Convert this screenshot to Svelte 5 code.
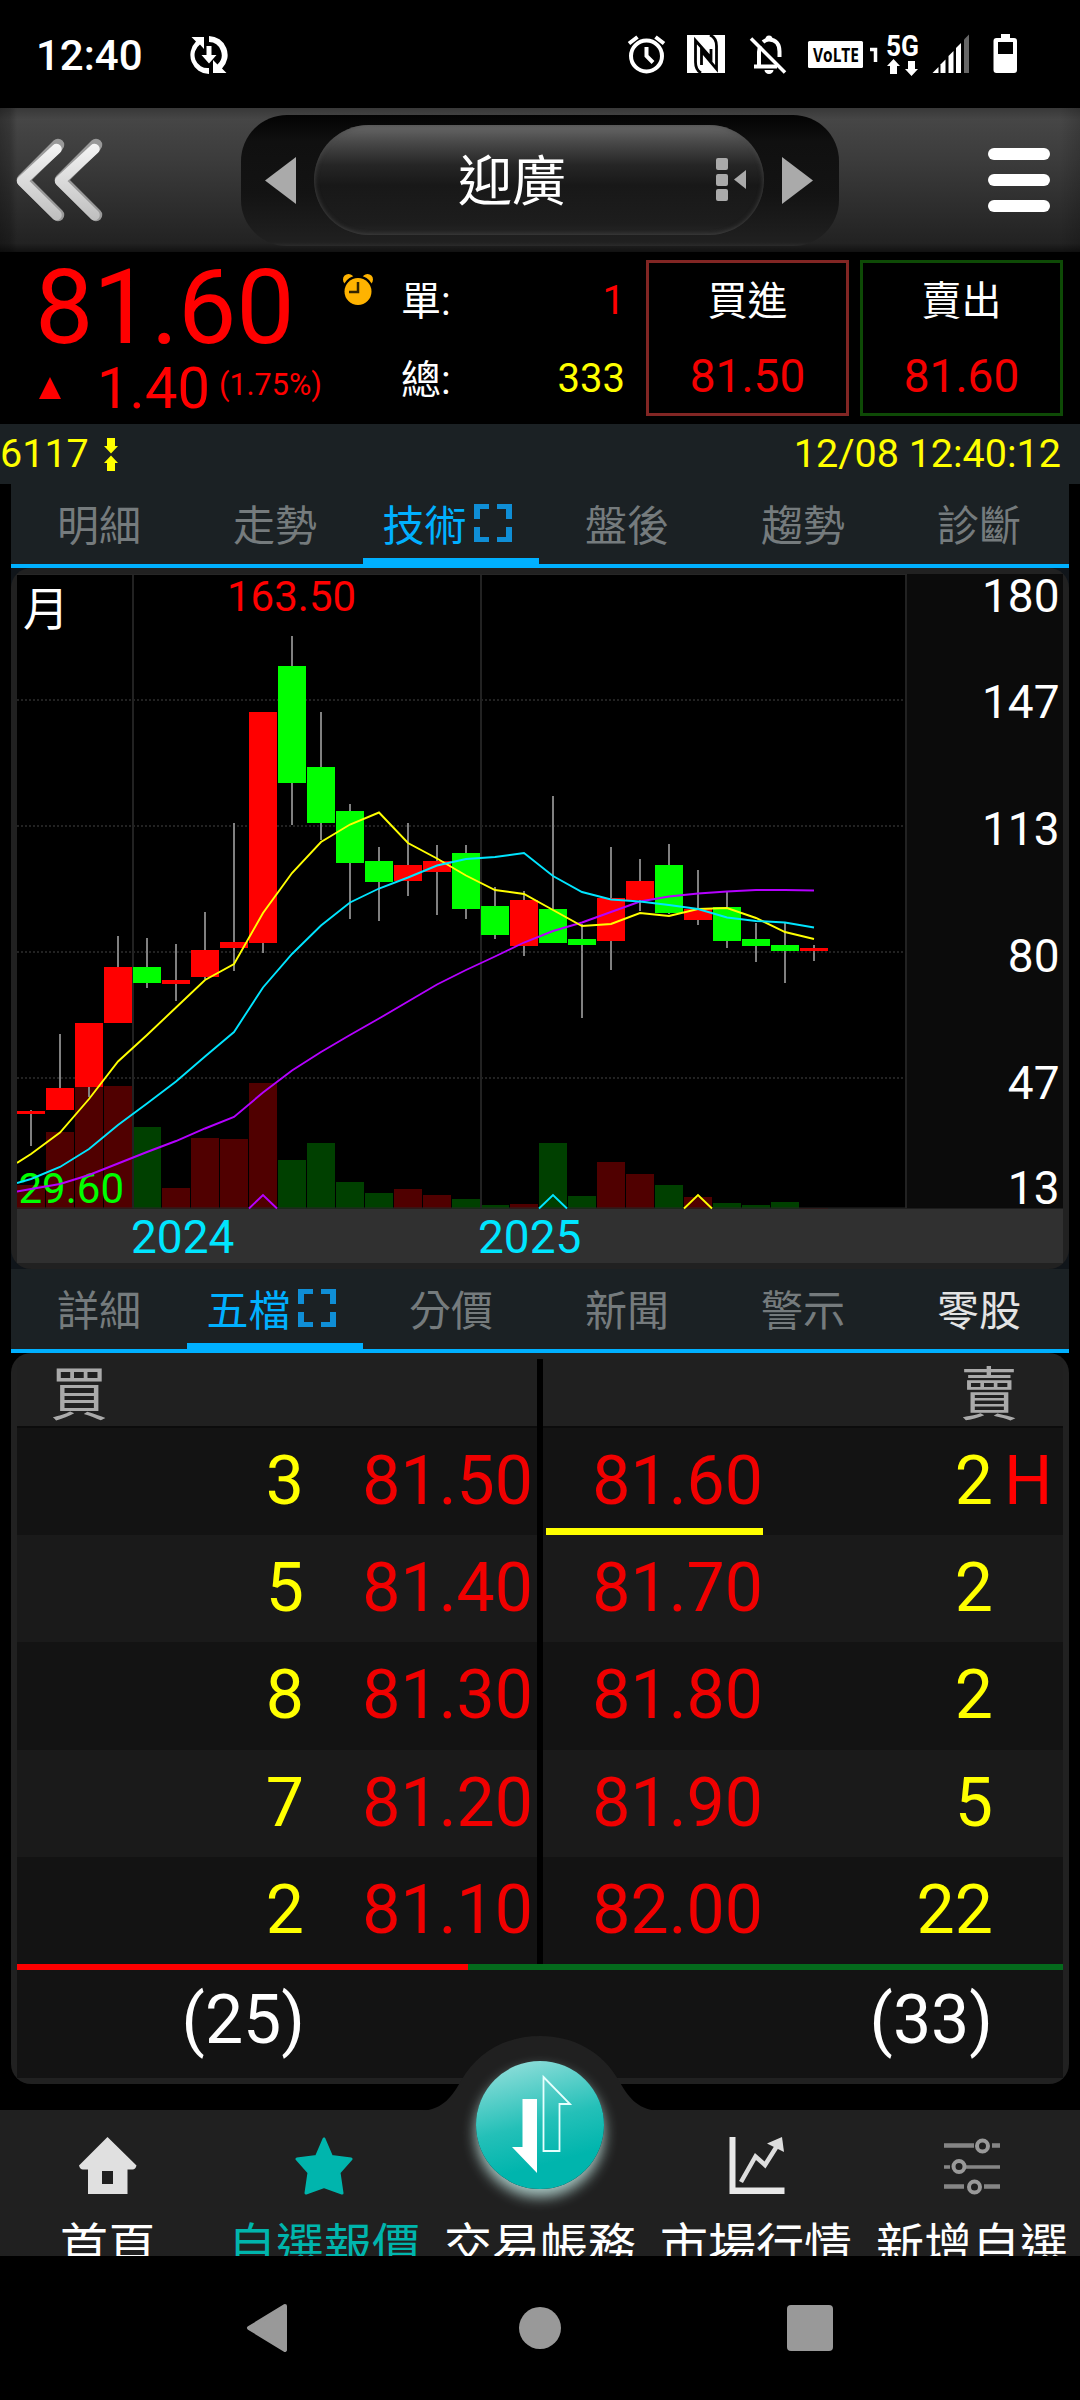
<script>
const topTabs = ["明細", "走勢", "技術", "盤後", "趨勢", "診斷"];
const lowerTabs = ["詳細", "五檔", "分價", "新聞", "警示", "零股"];
let topActive = $state(2);
let lowerActive = $state(1);

const bids = [
  { qty: 3, price: "81.50" },
  { qty: 5, price: "81.40" },
  { qty: 8, price: "81.30" },
  { qty: 7, price: "81.20" },
  { qty: 2, price: "81.10" },
];
const asks = [
  { qty: 2, price: "81.60", mark: "H" },
  { qty: 2, price: "81.70" },
  { qty: 2, price: "81.80" },
  { qty: 5, price: "81.90" },
  { qty: 22, price: "82.00" },
];
let bidTotal = $derived(bids.reduce((sum, b) => sum + b.qty, 0));
let askTotal = $derived(asks.reduce((sum, a) => sum + a.qty, 0));

// body top, body bottom, high, low, volume top, up?
const candles = [
  [541, 544, 540, 576, 615, 1],
  [518, 540, 464, 540, 562, 1],
  [453, 517, 453, 527, 517, 1],
  [397, 453, 366, 453, 516, 1],
  [397, 413, 368, 418, 557, 0],
  [410, 414, 374, 431, 618, 1],
  [380, 407, 342, 409, 568, 1],
  [372, 378, 253, 401, 569, 1],
  [142, 373, 142, 383, 513, 1],
  [96, 213, 66, 255, 590, 0],
  [197, 253, 142, 270, 573, 0],
  [241, 293, 234, 349, 612, 0],
  [291, 312, 277, 351, 623, 0],
  [295, 311, 253, 326, 619, 1],
  [291, 302, 275, 345, 625, 1],
  [283, 339, 275, 349, 629, 0],
  [336, 365, 317, 369, 635, 0],
  [330, 376, 321, 386, 634, 1],
  [339, 373, 226, 373, 573, 0],
  [369, 375, 354, 448, 626, 0],
  [328, 371, 277, 400, 592, 1],
  [311, 330, 289, 341, 604, 1],
  [295, 343, 274, 344, 615, 0],
  [339, 350, 300, 355, 627, 1],
  [337, 371, 322, 378, 633, 0],
  [369, 376, 353, 392, 635, 0],
  [375, 381, 353, 413, 632, 0],
  [378, 381, 375, 391, 638, 1],
];

// moving averages, first value sits on the left edge of the plot
const averages = [
  { color: "#b400ff", ys: [621.5, 619, 614, 605, 593.5, 582, 571, 558.5, 547, 522.5, 500.5, 482, 465, 448.5, 431.5, 414.5, 400, 386.5, 372.5, 361, 352.5, 342, 331.5, 326.5, 323.5, 321.5, 320, 320, 320.5] },
  { color: "#ffff00", ys: [593, 584, 562.5, 529, 491.5, 465, 437.5, 410, 394, 343, 303, 272, 254.5, 242.5, 273, 288.5, 305.5, 320, 324, 340, 356, 354, 343, 346, 339, 338, 348, 362, 369] },
  { color: "#00e5ff", ys: [613, 609, 597, 579, 555, 533.5, 511.5, 486.5, 462, 417.5, 384, 355.5, 332.5, 318.5, 307.5, 295.5, 289, 287, 283, 306, 322, 329.5, 331.5, 335, 339, 347.5, 351, 352.5, 357.5] },
];
const markers = [
  { i: 8, color: "#b400ff" },
  { i: 18, color: "#00e5ff" },
  { i: 23, color: "#ffff00" },
];
const scaleLabels = [
  ["180", 42],
  ["147", 148],
  ["113", 275],
  ["80", 402],
  ["47", 529],
  ["13", 634],
];

const left = (i) => 17 + i * 29;
const mid = (i) => left(i) + 14;
const linePoints = (ys) =>
  ys.map((y, i) => `${i === 0 ? 17 : mid(i - 1)},${y}`).join(" ");
</script>

{#snippet tabBar(labels, active, pick, lit)}
  <div class="tabs">
    {#each labels as label, i}
      <button class="tab" class:active={i === active} class:lit={i === lit} onclick={() => pick(i)}>
        {label}
        {#if i === active}
          <svg class="expand" viewBox="0 0 38 38" width="38" height="38">
            <path d="M0 15V0h15v5H6v10zM38 15V0H23v5h9v10zM0 23v15h15v-5H6V23zM38 23v15H23v-5h9V23z" fill="#0f8ed6" />
          </svg>
        {/if}
      </button>
    {/each}
  </div>
{/snippet}

<div class="screen">
  <div class="status">
    <span class="clock">12:40</span>
    <svg class="sync" viewBox="190 35 38 38" width="38" height="38">
      <path d="M209 35a19 19 0 0 1 13 32.500l4.500 4.500h-13.500V59l4.500 4.500A13 13 0 0 0 209 41z" fill="#fff" />
      <path d="M209 73a19 19 0 0 1-13-32.500L191.500 36H204v12l-4-4.500A13 13 0 0 0 209 67z" fill="#fff" />
      <path d="M206.500 45h5v9h5L209 62.500 201.500 54h5z" fill="#fff" />
    </svg>
    <svg class="status-icons" viewBox="620 30 400 50" width="400" height="50">
      <g fill="none" stroke="#fff" stroke-width="4">
        <circle cx="646.500" cy="56" r="15.500" />
        <path d="M646.500 47v9l6.500 6.500" stroke-width="4" />
        <path d="M629 43.500l8.500-6.500M664 43.500l-8.500-6.500" />
      </g>
      <rect x="687" y="35" width="38" height="38" fill="#fff" />
      <path d="M701 73q-5.500-3-5.500-11V40.500L711 58V49M710 35q6.500 3 6.500 11V69L701.500 51v14" fill="none" stroke="#000" stroke-width="2.800" />
      <g fill="none" stroke="#fff" stroke-width="4">
        <path d="M759 67V52q0-3 1.500-6M763 42q3-2.500 6-2.500c7 0 10.500 5 10.500 12v5.500M754 66.500h23" />
        <path d="M751 38.500l34 34" stroke-width="3.600" />
      </g>
      <path d="M765.500 41v-2a3.500 3.500 0 0 1 7 0v2zM764.500 70h9a4.500 4 0 0 1-9 0z" fill="#fff" />
      <rect x="808" y="41" width="55" height="27" rx="1.500" fill="#fff" />
      <text class="volte" x="813" y="62" textLength="46" lengthAdjust="spacingAndGlyphs">VoLTE</text>
      <path d="M870 49.500h5.500V62" fill="none" stroke="#fff" stroke-width="3.500" />
      <text class="fiveg" x="886" y="56" textLength="33" lengthAdjust="spacingAndGlyphs">5G</text>
      <path d="M893.500 59l6.500 7h-3v8h-7v-8h-3zM911.500 76l-6.500-7h3v-8h7v8h3z" fill="#fff" />
      <g fill="#fff">
        <path d="M932.500 73l6-6v6z" />
        <path d="M940.500 73v-8.500l5-5V73z" />
        <path d="M948.500 73V56l5-5v22z" />
        <path d="M956 73V48l5-5v30z" />
        <path d="M964 73V39.500l5-5V73z" fill="#666" />
      </g>
      <path d="M1001 34h9v4h4q3 0 3 3v29q0 3-3 3h-17.500q-3 0-3-3V41q0-3 3-3h4.500z" fill="#fff" />
      <rect x="998" y="42" width="15" height="12" fill="#000" />
    </svg>
  </div>

  <header class="header">
    <svg class="back" viewBox="14 136 92 88" width="92" height="88">
      <defs>
        <linearGradient id="chev" gradientUnits="userSpaceOnUse" x1="0" y1="140" x2="0" y2="222">
          <stop offset="0" stop-color="#f8f8f8" />
          <stop offset="1" stop-color="#bdbdbd" />
        </linearGradient>
      </defs>
      <g fill="none" stroke-linecap="round" stroke-linejoin="round">
        <path d="M58 145L23 180l35 35M96 145L61 180l35 35" stroke="#999" stroke-width="12.500" />
        <path d="M56.500 149L22 181l34.500 34M94.500 149L60 181l34.500 34" stroke="url(#chev)" stroke-width="10.500" />
      </g>
    </svg>
    <div class="switcher">
      <svg viewBox="0 0 31 47" width="31" height="47"><path d="M0 23.500L31 0v47z" fill="#aaa" /></svg>
      <div class="name">
        <span>迎廣</span>
        <svg class="picker" viewBox="0 0 31 44" width="31" height="44">
          <g fill="#aaa">
            <rect x="0" y="0" width="12" height="12" rx="2" />
            <rect x="0" y="16" width="12" height="12" rx="2" />
            <rect x="0" y="31" width="12" height="12" rx="2" />
            <path d="M18 21.500L30 12v19z" />
          </g>
        </svg>
      </div>
      <svg viewBox="0 0 31 47" width="31" height="47"><path d="M31 23.500L0 0v47z" fill="#aaa" /></svg>
    </div>
    <div class="menu"><i></i><i></i><i></i></div>
  </header>

  <section class="quote">
    <div class="last">
      <div class="price">81.60</div>
      <div class="change">
        <svg viewBox="0 0 22 22" width="22" height="22"><path d="M11 0L22 22H0z" fill="#f00" /></svg>
        <span class="diff">1.40</span>
        <span class="pct">(1.75%)</span>
      </div>
    </div>
    <svg class="alarm" viewBox="343 274 30 32" width="30" height="32">
      <g fill="#ffb300">
        <circle cx="348.500" cy="279.500" r="5.500" />
        <circle cx="367.500" cy="279.500" r="5.500" />
        <circle cx="358" cy="291" r="15.500" fill="#000" />
        <circle cx="358" cy="291.500" r="13.500" />
      </g>
      <path d="M358 282v10h-9" fill="none" stroke="#332400" stroke-width="2.500" />
    </svg>
    <dl class="volume">
      <div><dt class="up">單:</dt><dd class="red">1</dd></div>
      <div><dt>總:</dt><dd>333</dd></div>
    </dl>
    <button class="deal buy"><span>買進</span><b>81.50</b></button>
    <button class="deal sell"><span>賣出</span><b>81.60</b></button>
  </section>

  <div class="info">
    <span>6117</span>
    <svg viewBox="0 0 14 33" width="14" height="33">
      <path d="M3 0h8v8h3l-7 7.500L0 8h3zM3 33h8v-8h3l-7-7.500L0 25h3z" fill="#ff0" />
    </svg>
    <time>12/08 12:40:12</time>
  </div>

  <main class="body">
    {@render tabBar(topTabs, topActive, (i) => (topActive = i), -1)}

    <div class="chart-wrap">
      <div class="chart">
        <svg viewBox="17 4 1046 689" width="1046" height="689">
          <rect x="17" y="4" width="1046" height="635" fill="#000" />
          <rect x="907" y="4" width="156" height="635" fill="#0b0b0b" />
          <rect x="17" y="638.500" width="1046" height="54.500" fill="#303030" />

          {#each candles as c, i}
            <rect x={left(i)} y={c[4]} width="28" height={638.5 - c[4]} fill={c[5] ? "#500000" : "#004000"} />
          {/each}

          {#each [130, 256, 382, 508] as y}
            <line x1="17" x2="907" y1={y} y2={y} stroke="#2e2e2e" stroke-width="1.500" stroke-dasharray="2 2" />
          {/each}
          {#each [133, 481, 906] as x}
            <line x1={x} x2={x} y1="4" y2="638" stroke="#222" stroke-width="2" />
          {/each}
          <path d="M17 4.500H907M17 638H907" stroke="#262626" />

          {#each candles as c, i}
            <rect x={mid(i) - 1} y={c[2]} width="2" height={c[3] - c[2]} fill="#808080" />
            <rect x={left(i)} y={c[0]} width="28" height={c[1] - c[0]} fill={c[5] ? "#ff0000" : "#00ff00"} />
          {/each}

          <text x="18.500" y="633" class="extreme" fill="#00ff00">29.60</text>
          {#each averages as avg}
            <polyline points={linePoints(avg.ys)} fill="none" stroke={avg.color} stroke-width="1.900" />
          {/each}
          {#each markers as m}
            <path d={`M${left(m.i)} 638.500l14-13.500 14 13.500`} fill="none" stroke={m.color} stroke-width="1.900" />
          {/each}

          <text x="23" y="54.500" class="period">月</text>
          <text x="227" y="41" class="extreme" fill="#ff0000">163.50</text>
          {#each scaleLabels as [label, y]}
            <text x="1059.500" {y} class="axis" text-anchor="end">{label}</text>
          {/each}
          <text x="131" y="682.500" class="axis year">2024</text>
          <text x="478" y="682.500" class="axis year">2025</text>
        </svg>
      </div>
    </div>

    {@render tabBar(lowerTabs, lowerActive, (i) => (lowerActive = i), 5)}

    <div class="book">
      <div class="sides">
        <div class="side">
          <div class="head">買</div>
          {#each bids as b}
            <div class="row bid"><span class="qty">{b.qty}</span><span class="px">{b.price}</span></div>
          {/each}
        </div>
        <div class="side">
          <div class="head right">賣</div>
          {#each asks as a}
            <div class="row ask">
              <span class="px" class:hit={a.mark}>{a.price}</span>
              <span class="qty">{a.qty}</span>
              <span class="mark">{a.mark ?? ""}</span>
            </div>
          {/each}
        </div>
      </div>
      <div class="ratio"><i style:width="{(bidTotal / (bidTotal + askTotal)) * 100}%"></i></div>
      <div class="totals"><span>({bidTotal})</span><span>({askTotal})</span></div>
    </div>
  </main>

  <nav class="nav">
    <svg class="hump" viewBox="0 0 240 75" width="240" height="75">
      <path d="M2 75C24 73 32 60 41 45C57 16 86 0 120 0s63 16 79 45C208 60 216 73 238 75z" fill="#202020" />
    </svg>
    <a class="item">
      <svg viewBox="79 2137 58 58" width="58" height="58">
        <path fill-rule="evenodd" d="M107.500 2137l29 28.500q-1 4-4 4h-5V2194H88v-24.500h-5q-3 0-4-4zM102 2171v13h11v-13z" fill="#e0e0e0" />
      </svg>
      <span>首頁</span>
    </a>
    <a class="item on">
      <svg viewBox="0 0 58 58" width="58" height="58">
        <path d="M29 2l7.500 17.500L56 22 44 35.500 47 56 29 49.500 11 56l3-20.500L2 22l19.500-2.500z" fill="#00b5ad" stroke="#00b5ad" stroke-width="3" stroke-linejoin="round" />
      </svg>
      <span>自選報價</span>
    </a>
    <a class="item"><i></i><span>交易帳務</span></a>
    <a class="item">
      <svg viewBox="727 2137 58 58" width="58" height="58">
        <path d="M729.500 2137h6v50.500h49v6.500h-55z" fill="#e8e8e8" />
        <path d="M741 2182l14.500-25.500 9.500 8.500 12-19" fill="none" stroke="#ddd" stroke-width="4.500" />
        <path d="M782 2137l2 15-17-8.500z" fill="#ddd" />
      </svg>
      <span>市場行情</span>
    </a>
    <a class="item">
      <svg viewBox="944 2137 58 58" width="58" height="58">
        <g fill="none" stroke="#858585" stroke-width="4.500">
          <path d="M945 2145.500h30M993 2145.500h8M945 2186.500h20M985 2186.500h16" />
          <path d="M945 2167h6M967 2167h34" stroke-width="3.500" />
          <g stroke="#999" stroke-width="4">
            <circle cx="983.500" cy="2146" r="5.500" />
            <circle cx="960" cy="2166.500" r="5.500" />
            <circle cx="975.500" cy="2187" r="5.500" />
          </g>
        </g>
      </svg>
      <span>新增自選</span>
    </a>
    <button class="trade" aria-label="交易帳務">
      <svg viewBox="476 2061 128 128" width="128" height="128">
        <path d="M522.500 2099H537v74l-25-26h10.500z" fill="#fff" />
        <path d="M543.500 2077l26.500 27h-10.500v47h-16z" fill="none" stroke="#e6fffd" stroke-width="1.800" />
      </svg>
    </button>
  </nav>

  <div class="system">
    <svg viewBox="0 0 42 48" width="42" height="48"><path d="M39 2L3 24l36 22z" fill="#999" stroke="#999" stroke-width="4" stroke-linejoin="round" /></svg>
    <i class="round"></i>
    <i class="square"></i>
  </div>
</div>

<style>
:global(body) {
  background: #000;
}
.screen {
  width: 1080px;
  height: 2400px;
  background: #000;
  color: #fff;
  font-family: Roboto, "Noto Sans CJK TC", sans-serif;
  overflow: hidden;
}
svg {
  display: block;
  flex: none;
}
button {
  font: inherit;
  color: inherit;
  background: none;
  border: 0;
  padding: 0;
}

.status {
  height: 108px;
  box-sizing: border-box;
  padding: 2px 60px 0 36px;
  display: flex;
  align-items: center;
}
.clock {
  width: 154px;
  font-size: 42px;
  font-weight: 500;
}
.status-icons {
  margin-left: auto;
}
.volte {
  font: 700 20px "Open Sans", sans-serif;
  fill: #000;
}
.fiveg {
  font: 700 29px Roboto, sans-serif;
  fill: #fff;
}

.header {
  height: 144px;
  display: flex;
  align-items: center;
  background:
    linear-gradient(90deg, rgba(0, 0, 0, 0.3), rgba(0, 0, 0, 0.2) 10px, transparent 17px, transparent 1060px, rgba(0, 0, 0, 0.15)),
    linear-gradient(#383838, #464646 8%, #3c3c3c 35%, #222 94%, #111);
}
.back {
  margin-left: 14px;
}
.switcher {
  width: 598px;
  height: 131px;
  margin-left: 135px;
  box-sizing: border-box;
  padding: 0 26px 0 24px;
  display: flex;
  align-items: center;
  justify-content: space-between;
  border-radius: 46px;
  background: linear-gradient(#030303, #101010 20%, #131313 60%, #202020 97%, #2a2a2a);
}
.name {
  width: 450px;
  height: 110px;
  border-radius: 55px;
  display: flex;
  align-items: center;
  padding-left: 144px;
  box-sizing: border-box;
  font-size: 54px;
  line-height: 1;
  background: linear-gradient(#686868, #484848 16%, #262626 36%, #181818 55%, #1d1d1d 90%, #262626);
  box-shadow: inset 0 0 5px #4a4a4a;
}
.name span {
  padding-top: 5px;
}
.picker {
  margin-left: 150px;
}
.menu {
  width: 62px;
  margin-left: 149px;
  display: grid;
  gap: 14px;
}
.menu i {
  height: 12px;
  border-radius: 6px;
  background: #fff;
}

.quote {
  height: 172px;
  display: flex;
}
.last {
  width: 343px;
  padding-top: 12px;
  box-sizing: border-box;
  color: #f00;
}
.price {
  height: 88px;
  padding-left: 35px;
  font-size: 104px;
  line-height: 88px;
  letter-spacing: -0.4px;
}
.change {
  height: 72px;
  padding-left: 39px;
  display: flex;
  align-items: center;
  line-height: 1;
}
.diff {
  margin-left: 36px;
  width: 122px;
  font-size: 58px;
}
.pct {
  font-size: 30.5px;
  margin-bottom: 5px;
}
.alarm {
  margin-top: 22px;
}
.volume {
  width: 224px;
  margin: 9px 21px 0 28px;
  font-size: 40px;
}
.volume div {
  height: 78px;
  display: flex;
  align-items: center;
  justify-content: space-between;
}
.volume dt {
  padding-bottom: 2px;
}
.volume dd {
  margin: 0;
  color: #ff0;
}
.volume .up {
  padding-bottom: 4px;
}
.volume .red {
  color: #f00;
}
.deal {
  width: 203px;
  height: 156px;
  margin: 8px 11px 0 0;
  box-sizing: border-box;
  border: 3px solid #822624;
  display: grid;
  grid-template-rows: 75px 75px;
  place-items: center;
  font-size: 40px;
}
.deal span {
  padding-bottom: 5px;
}
.sell {
  border-color: #0e4a06;
}
.deal b {
  color: #f40000;
  font-size: 46px;
  font-weight: 400;
}

.info {
  height: 60px;
  background: #1b2124;
  color: #ff0;
  font-size: 39.5px;
  line-height: 58px;
  display: flex;
  align-items: center;
}
.info svg {
  margin-left: 15px;
}
.info time {
  margin: 0 19px 0 auto;
}

.body {
  width: 1058px;
  margin: 0 auto;
}
.tabs {
  height: 84px;
  box-sizing: border-box;
  background: #1b2124;
  border-bottom: 4px solid #00b0ff;
  display: grid;
  grid-template-columns: repeat(6, 176px);
}
.tab {
  height: 80px;
  padding-top: 11px;
  box-sizing: border-box;
  border-bottom: 6px solid transparent;
  font-size: 42px;
  line-height: 1;
  color: #757b7d;
  display: flex;
  align-items: center;
  justify-content: center;
  gap: 7px;
}
.tab.lit {
  color: #e4e4e4;
}
.tab.active {
  color: #00b0ff;
  border-color: #00b0ff;
  padding-right: 8px;
}
.expand {
  margin-top: -7px;
}

.chart-wrap {
  background: #10151a;
}
.chart {
  height: 701px;
  box-sizing: border-box;
  padding: 6px;
  background: #212121;
  border-radius: 20px;
}
.chart text {
  font-family: Roboto, "Noto Sans CJK TC", sans-serif;
}
.extreme {
  font-size: 42px;
}
.period {
  font-size: 46px;
  fill: #fff;
}
.axis {
  font-size: 46px;
  fill: #fff;
}
.year {
  fill: #00e5ff;
}

.book {
  height: 731px;
  box-sizing: border-box;
  padding: 6px;
  background: #212121;
  border-radius: 20px;
  font-size: 68px;
}
.sides {
  display: grid;
  grid-template-columns: 520px 520px;
  gap: 6px;
  background: #000;
}
.head {
  height: 69px;
  box-sizing: border-box;
  padding: 0 33px;
  border-bottom: 2px solid #0c0c0c;
  background: #202020;
  color: #aaa;
  font-size: 58px;
  line-height: 72px;
}
.head.right {
  text-align: right;
  padding-right: 45px;
}
.row {
  height: 107.2px;
  display: flex;
  line-height: 107px;
  background: #131313;
}
.row:nth-child(odd) {
  background: #1a1a1a;
}
.qty {
  color: #ff0;
  text-align: right;
}
.px {
  color: #f00000;
  text-align: right;
}
.bid .qty {
  width: 287px;
}
.bid .px {
  width: 229px;
}
.ask .px {
  width: 217px;
  margin-left: 3px;
  box-sizing: border-box;
}
.ask .px.hit {
  border-bottom: 7px solid #ff0;
}
.ask .qty {
  width: 230px;
}
.mark {
  color: #f00;
  margin-left: 11px;
}
.ratio {
  height: 6px;
  background: #046a1c;
}
.ratio i {
  display: block;
  width: 0;
  height: 6px;
  background: #f00;
}
.totals {
  height: 108px;
  display: flex;
  background: #131313;
  line-height: 101px;
}
.totals span {
  width: 288px;
  text-align: right;
}
.totals span + span {
  width: 688px;
}

.nav {
  position: relative;
  height: 146px;
  margin-top: 26px;
  background: #202020;
  display: grid;
  grid-template-columns: repeat(5, 216px);
}
.hump {
  position: absolute;
  left: 420px;
  top: -74px;
}
.item {
  height: 146px;
  box-sizing: border-box;
  padding-top: 27px;
  overflow: hidden;
  display: flex;
  flex-direction: column;
  align-items: center;
}
.item i {
  flex: none;
  height: 58px;
}
.item span {
  flex: none;
  margin-top: 22px;
  font-size: 48px;
  line-height: 60px;
  white-space: nowrap;
}
.item.on {
  color: #00b5ad;
}
.trade {
  position: absolute;
  left: 476px;
  top: -49px;
  width: 128px;
  height: 128px;
  border-radius: 50%;
  background: linear-gradient(165deg, #96e0dc 3%, #24c0b8 48%, #00b5ad 75%);
  box-shadow: 0 8px 14px rgba(215, 255, 250, 0.75);
}

.system {
  height: 144px;
  display: flex;
  align-items: center;
  padding-left: 246px;
}
.system i {
  background: #999;
}
.round {
  width: 42px;
  height: 42px;
  margin-left: 231px;
  border-radius: 50%;
}
.square {
  width: 46px;
  height: 46px;
  margin-left: 226px;
  border-radius: 4px;
}
</style>
